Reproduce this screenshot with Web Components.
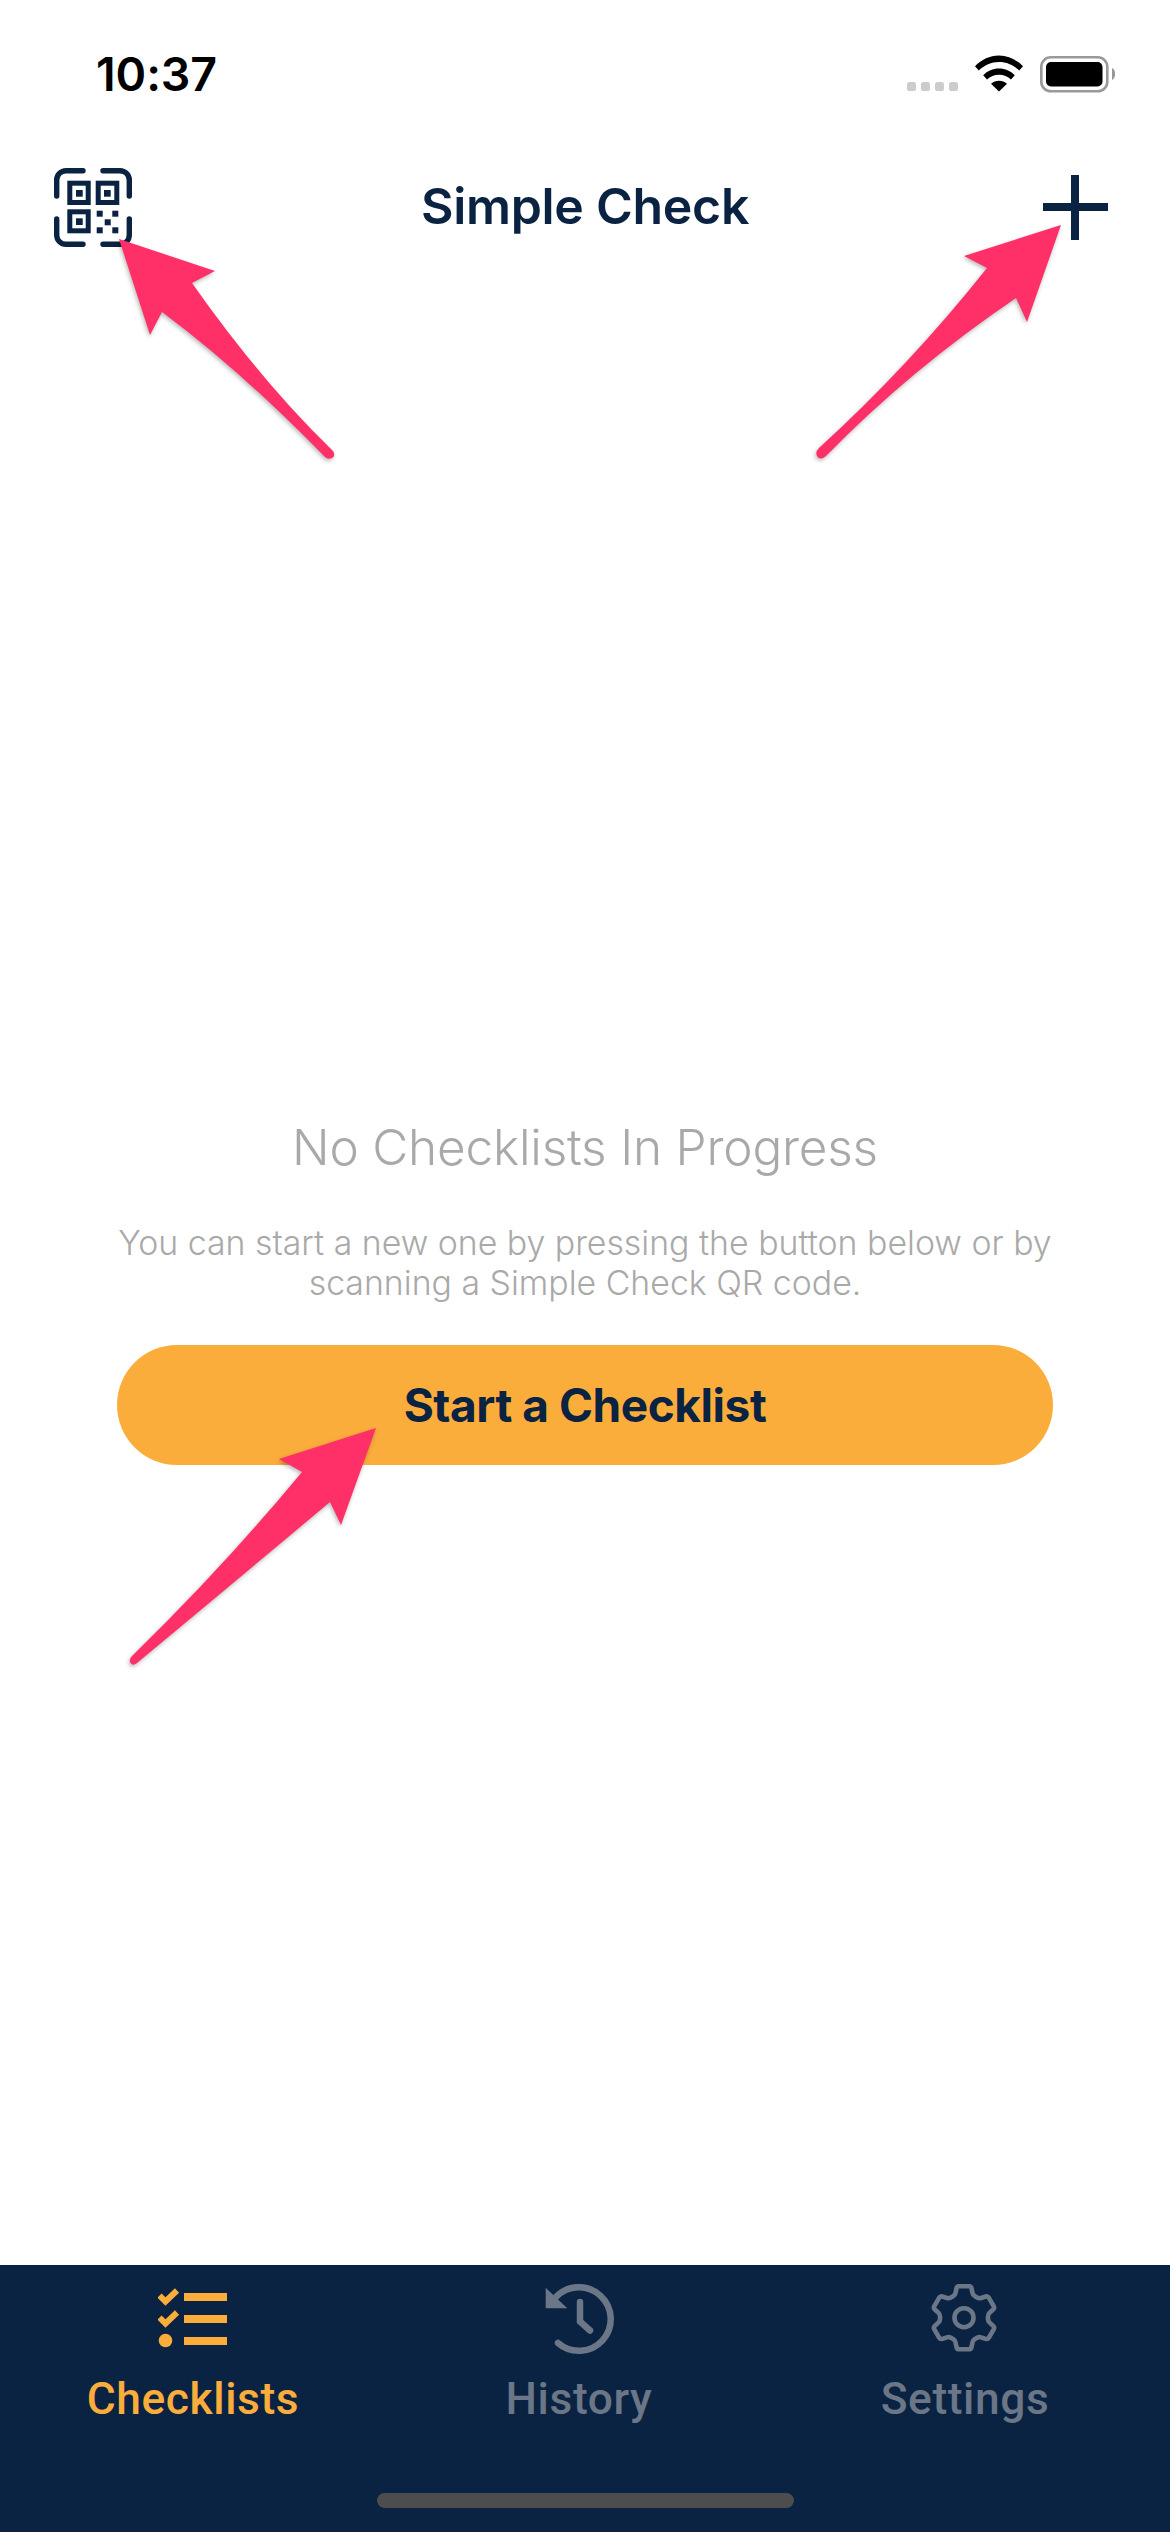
<!DOCTYPE html>
<html><head><meta charset="utf-8"><title>Simple Check</title>
<style>
html,body{margin:0;padding:0;background:#fff}
body{width:1170px;height:2532px;overflow:hidden;font-family:Inter,"Liberation Sans",sans-serif}
</style></head><body>
<checklist-app>
  <status-bar slot="status" time="10:37"></status-bar>
  <top-nav slot="nav" heading="Simple Check"></top-nav>
  <empty-state slot="main" heading="No Checklists In Progress" action="Start a Checklist">You can start a new one by pressing the button below or by<br>scanning a Simple Check QR code.</empty-state>
  <tab-bar slot="tabs"></tab-bar>
</checklist-app>
<call-outs></call-outs>
<script>
function def(name, css, html){
  customElements.define(name, class extends HTMLElement{
    connectedCallback(){
      if(this.shadowRoot) return;
      const r=this.attachShadow({mode:'open'});
      r.innerHTML='<style>'+css+'</style>'+(typeof html==='function'?html(this):html);
    }
  });
}
function gearPath(cx,cy){
  const pts=[];
  for(let i=0;i<6;i++){
    const a=(-90+60*i)*Math.PI/180, ca=Math.cos(a), sa=Math.sin(a);
    const P=(r,w)=>[cx+r*ca-w*sa, cy+r*sa+w*ca];
    pts.push(P(22.500,-9),P(31.500,-7),P(31.500,7),P(22.500,9));
  }
  const n=pts.length; let d='';
  const R=2.2;
  for(let i=0;i<n;i++){
    const p=pts[i],a=pts[(i+n-1)%n],b=pts[(i+1)%n];
    const to=(q)=>{const dx=q[0]-p[0],dy=q[1]-p[1],l=Math.hypot(dx,dy),t=Math.min(R,l/2)/l;return [p[0]+dx*t,p[1]+dy*t];};
    const s=to(a),e=to(b);
    d+=(i?'L':'M')+s[0].toFixed(1)+' '+s[1].toFixed(1)+'Q'+p[0].toFixed(1)+' '+p[1].toFixed(1)+' '+e[0].toFixed(1)+' '+e[1].toFixed(1);
  }
  return d+'Z';
}
def('checklist-app',`:host{display:flex;flex-direction:column;width:1170px;height:2532px}
 .main{flex:1;display:flex;flex-direction:column;min-height:0}`,
 `<slot name="status"></slot><slot name="nav"></slot><div class="main"><slot name="main"></slot></div><slot name="tabs"></slot>`);

def('status-bar',`:host{display:flex;align-items:flex-start;height:168px;box-sizing:border-box;padding:47px 55px 0 96px;justify-content:space-between}
 .t{font:600 46.500px/54px Inter,sans-serif;color:#000;letter-spacing:-.1px}
 .r{display:block;margin-top:8px}`,
 h=>`<div class="t">${h.getAttribute('time')}</div>
 <svg class="r" width="208" height="38" viewBox="907 55 208 38" aria-hidden="true">
  <g fill="#ccc"><rect x="907" y="82" width="9" height="9" rx="2.600"/><rect x="921" y="82" width="9" height="9" rx="2.600"/><rect x="935" y="82" width="9" height="9" rx="2.600"/><rect x="949" y="82" width="9" height="9" rx="2.600"/></g>
  <path d="M975 66.200C981.500 59.600 989.800 55.500 999 55.500s17.500 4.100 24 10.700l-3.800 4.300C1013.700 65.100 1006.700 62 999 62s-14.700 3.100-20.200 8.500z"/>
  <path d="M983.200 75.200C987.400 71.100 992.900 68.600 999 68.600s11.600 2.500 15.800 6.600l-3.800 4.300C1007.800 76.500 1003.600 74.800 999 74.800s-8.800 1.700-12 4.700z"/>
  <path d="M991 83.700c2.200-1.900 5-3 8-3s5.800 1.100 8 3l-8 7.800z"/>
  <rect x="1041.300" y="57.300" width="66" height="34" rx="9.500" fill="none" stroke="#999" stroke-width="2.600"/>
  <rect x="1046" y="62" width="56.500" height="24.500" rx="5"/>
  <path d="M1112 68c2 .8 3.200 3.400 3.200 6s-1.200 5.200-3.200 6z" fill="#999"/>
 </svg>`);

def('top-nav',`:host{display:grid;grid-template-columns:1fr auto 1fr;align-items:center;height:79px;padding:0 54px;color:#0a2342}
 .t{font:600 50px/60px Inter,sans-serif;letter-spacing:-.3px;text-align:center;margin-top:-3px}
 svg{display:block}.end{justify-self:end;margin-right:8px}`,
 h=>`<svg width="78" height="79" viewBox="0 0 78 79" aria-label="Scan QR code" role="img">
  <g fill="none" stroke="#0a2342" stroke-width="5.400" stroke-linecap="round">
   <path d="M2.700 28V12a9.300 9.300 0 0 1 9.300-9.300H29"/><path d="M49 2.700h17a9.300 9.300 0 0 1 9.300 9.300V28"/>
   <path d="M2.700 51v16a9.300 9.300 0 0 0 9.300 9.300H29"/><path d="M49 76.300h17a9.300 9.300 0 0 0 9.300-9.300V51"/>
  </g>
  <g fill="none" stroke="#0a2342" stroke-width="5">
   <rect x="15.800" y="15.200" width="18.400" height="19.300"/><rect x="44.200" y="15.200" width="18.600" height="19.300"/><rect x="15.800" y="43.800" width="18.400" height="19"/>
  </g>
  <g fill="#0a2342">
   <rect x="22" y="22" width="6.700" height="6.700"/><rect x="50" y="22" width="6.700" height="6.700"/><rect x="22" y="50.300" width="6.700" height="6.700"/>
   <rect x="42.700" y="42.700" width="6" height="6"/><rect x="58.300" y="42.700" width="6" height="6"/><rect x="50.700" y="51.300" width="6" height="6"/><rect x="42.700" y="59.300" width="6" height="6"/><rect x="58.300" y="59.300" width="6" height="6"/>
  </g>
 </svg>
 <div class="t">${h.getAttribute('heading')}</div>
 <svg class="end" width="65" height="65" viewBox="0 0 65 65" aria-label="Add" role="img"><path d="M28 0h8v28h29v8H36v29h-8V36H0v-8h28z" fill="#0a2342"/></svg>`);

def('empty-state',`:host{display:flex;flex-direction:column;align-items:center;text-align:center;box-sizing:border-box;height:100%;padding-top:870px}
 h2{margin:0;font:300 49.500px/60px Inter,sans-serif;color:#a9a9a9;letter-spacing:-.2px}
 p{margin:46px 0 0;font:300 33.850px/40px Inter,sans-serif;color:#a9a9a9}
 button{all:unset;box-sizing:border-box;margin-top:42px;width:936px;height:120px;border-radius:60px;background:#fbad3c;color:#0a2342;font:700 46px/120px Inter,sans-serif;letter-spacing:-.45px;text-align:center}`,
 h=>`<h2>${h.getAttribute('heading')}</h2><p><slot></slot></p><button>${h.getAttribute('action')}</button>`);

def('tab-bar',`:host{display:block;position:relative;height:267px;background:#0a2342}
 .g{display:grid;grid-template-columns:repeat(3,386px)}
 .tab{display:flex;flex-direction:column;align-items:center;padding-top:19px;color:#6b7686;font:500 44.300px/50px Roboto,sans-serif;letter-spacing:.6px}
 .tab.on{color:#fbad3c}
 .ic{height:71px;margin-bottom:19px}
 svg{display:block}
 .home{position:absolute;left:377px;top:228px;width:417px;height:15px;border-radius:8px;background:#4d4d4d}`,
 `<div class="g">
  <div class="tab on"><div class="ic"><svg width="70" height="71" viewBox="158 2284 70 71" aria-hidden="true" fill="#fbad3c">
    <rect x="184" y="2293" width="43" height="8"/><rect x="184" y="2315" width="43" height="8"/><rect x="184" y="2337" width="43" height="8"/>
    <circle cx="165.500" cy="2340.500" r="6.800"/>
    <g fill="none" stroke="#fbad3c" stroke-width="6"><path d="M159.500 2295.500l6 6 11.500-11"/><path d="M159.500 2317.500l6 6 11.500-11"/></g>
  </svg></div>Checklists</div>
  <div class="tab"><div class="ic"><svg width="70" height="71" viewBox="544 2284 70 71" aria-hidden="true">
    <g fill="none" stroke="#6b7686" stroke-width="6.500" stroke-linecap="round">
      <path d="M556 2297A31.800 31.800 0 1 1 558 2343"/>
      <path d="M580 2302v19.500l10 9" stroke-linejoin="miter"/>
    </g>
    <path d="M545.700 2287.700v20.600h21.600z" fill="#6b7686"/>
  </svg></div>History</div>
  <div class="tab"><div class="ic"><svg width="70" height="71" viewBox="930 2284 70 71" aria-hidden="true">
    <g fill="none" stroke="#6b7686" stroke-width="4.600" stroke-linejoin="round">
    <circle cx="964" cy="2317.700" r="9.500"/>
    <path d="${gearPath(964,2317.700)}"/>
    </g>
  </svg></div>Settings</div>
 </div><div class="home"></div>`);

def('call-outs',`:host{display:block;position:absolute;left:0;top:0;width:1170px;height:2532px;pointer-events:none}
 svg{display:block;filter:drop-shadow(-1px 2px 2px rgba(0,0,0,.28))}
 path{fill:#ff3068;stroke:none}`,
 `<svg width="1170" height="2532" viewBox="0 0 1170 2532" aria-hidden="true">
  <path d="M119 239L215 271L192 283Q260 380 333 451Q336 456 332 458Q328 460 325 457Q240 370 162 312L150 335Z"/>
  <path d="M1061 225L1027 322L1016 298Q910 370 826 456Q820 461 817 456Q815 452 819 448Q910 365 987 268L964 256Z"/>
  <path d="M376 1428L341 1525L330 1502Q225 1590 137 1663Q132 1667 130 1662Q129 1659 132 1656Q225 1565 302 1472L279 1459Z"/>
 </svg>`);
</script>
</body></html>
